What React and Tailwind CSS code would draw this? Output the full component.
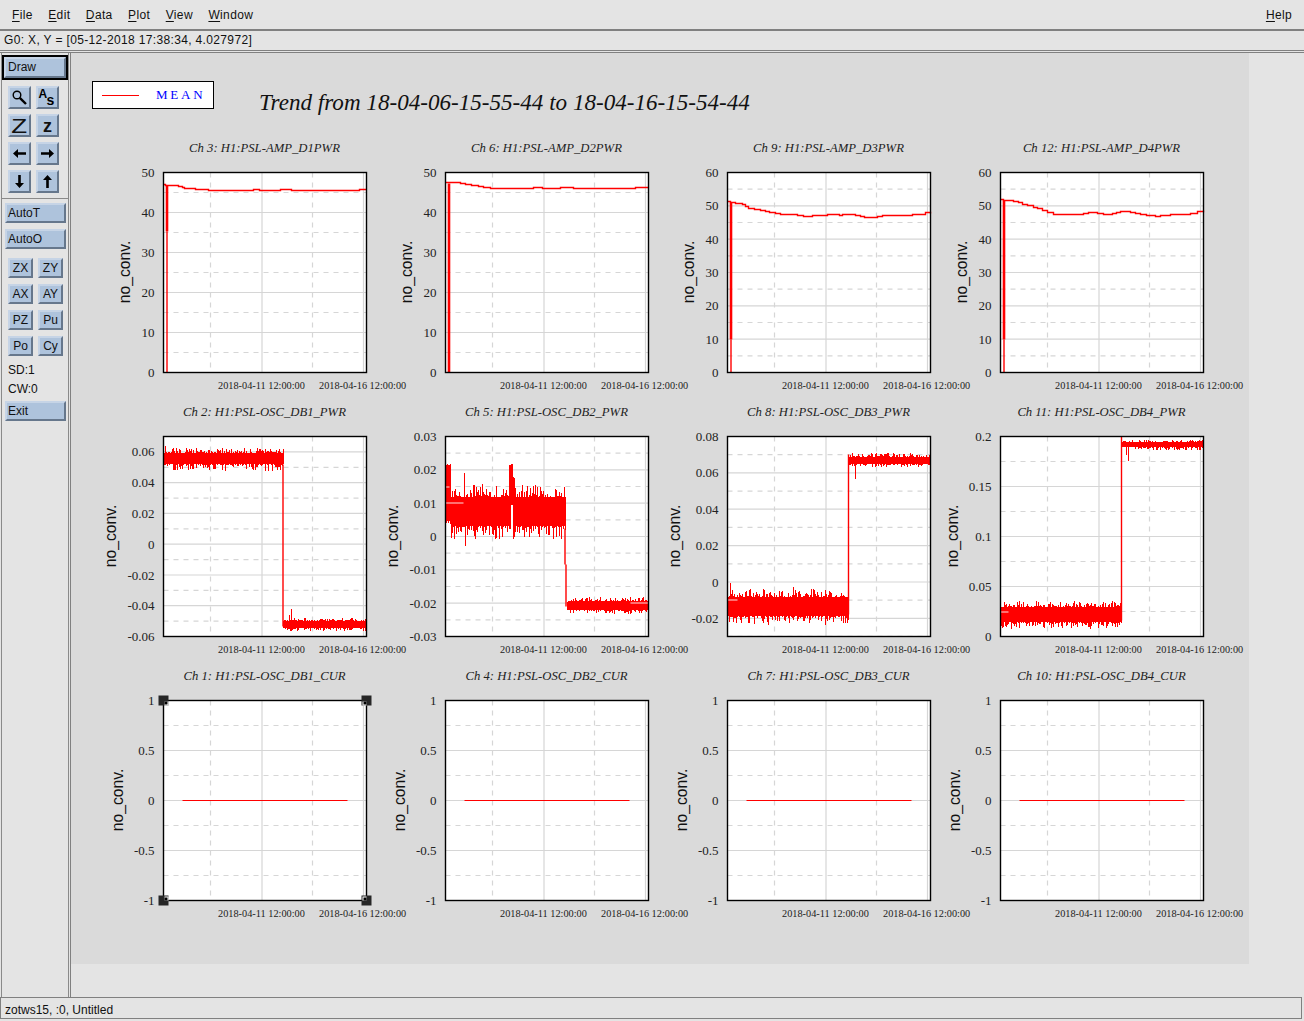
import React from "react";

const rng = (seed) => () => {
  seed = (seed * 16807) % 2147483647;
  return seed / 2147483647;
};

// one noisy block: a vertical stroke per pixel column
const band = (x0, x1, top, bot, up, down, seed) => {
  const r = rng(seed);
  let d = "";
  for (let x = x0; x < x1; x++) {
    const t = top - Math.pow(r(), 2.5) * up + r();
    const b = bot + Math.pow(r(), 2.5) * down - r();
    d += `M${x + 0.5} ${t.toFixed(1)}V${b.toFixed(1)}`;
  }
  return d;
};

const steps = (pts) => {
  let d = `M${pts[0][0]} ${pts[0][1]}`;
  for (let i = 1; i < pts.length; i++) {
    d += `H${pts[i][0]}V${pts[i][1]}`;
  }
  return d;
};

const scale50 = [[0, "50"], [40, "40"], [80, "30"], [120, "20"], [160, "10"], [200, "0"]];
const scale60 = [[0, "60"], [33.3, "50"], [66.7, "40"], [100, "30"], [133.3, "20"], [166.7, "10"], [200, "0"]];
const scaleOne = [[0, "1"], [50, "0.5"], [100, "0"], [150, "-0.5"], [200, "-1"]];

const plots = [
  {
    title: "Ch 3: H1:PSL-AMP_D1PWR", ticks: scale50, label: -34,
    line: steps([[0, 12], [2, 13], [15, 14], [19, 15], [21, 16], [32, 17], [45, 18], [90, 17], [96, 18], [117, 17], [128, 18], [196, 17], [203, 17]]),
    thick: "M3.5 13V59", spike: "M3.5 59V200",
  },
  {
    title: "Ch 6: H1:PSL-AMP_D2PWR", ticks: scale50, label: -34,
    line: steps([[0, 10], [15, 11], [20, 12], [26, 13], [33, 14], [38, 15], [45, 16], [88, 15], [97, 16], [115, 15], [128, 16], [190, 15], [203, 15]]),
    thick: "M3.5 11V200",
  },
  {
    title: "Ch 9: H1:PSL-AMP_D3PWR", ticks: scale60, label: -34,
    line: steps([[0, 29], [3, 30], [8, 31], [15, 32], [18, 34], [21, 36], [27, 37], [33, 38], [38, 39], [42, 40], [48, 41], [53, 42], [70, 43], [76, 44], [85, 43], [100, 42], [112, 43], [115, 42], [128, 43], [133, 44], [137, 45], [150, 44], [155, 43], [185, 42], [198, 40], [203, 41]]),
    thick: "M3.5 30V167", spike: "M3.5 167V200",
  },
  {
    title: "Ch 12: H1:PSL-AMP_D4PWR", ticks: scale60, label: -34,
    line: steps([[0, 27], [3, 28], [13, 29], [18, 30], [22, 32], [27, 33], [33, 35], [37, 36], [42, 38], [47, 40], [53, 42], [83, 41], [88, 40], [97, 41], [103, 42], [112, 41], [116, 40], [120, 39], [130, 40], [135, 41], [140, 42], [146, 43], [155, 44], [160, 43], [170, 42], [180, 42], [190, 41], [197, 39], [203, 38]]),
    thick: "M3.5 28V167", spike: "M3.5 167V200",
  },
  {
    title: "Ch 2: H1:PSL-OSC_DB1_PWR", label: -48,
    ticks: [[15.4, "0.06"], [46.2, "0.04"], [76.9, "0.02"], [107.7, "0"], [138.5, "-0.02"], [169.2, "-0.04"], [200, "-0.06"]],
    noise: band(0, 120, 16, 28, 5, 7, 11) + band(119, 203, 184, 192, 3, 3, 23) + "M1.5 9V17M127.5 172V184M125.5 178V184",
    spike: "M119.5 28V190",
  },
  {
    title: "Ch 5: H1:PSL-OSC_DB2_PWR", label: -48,
    ticks: [[0, "0.03"], [33.3, "0.02"], [66.7, "0.01"], [100, "0"], [133.3, "-0.01"], [166.7, "-0.02"], [200, "-0.03"]],
    noise: band(5, 63, 60, 90, 13, 14, 37) + band(67, 120, 60, 90, 13, 14, 41) + band(0, 5, 28, 85, 2, 3, 5) + band(63, 65, 28, 92, 0, 4, 6) + band(65, 67, 27, 69, 0, 0, 7) + band(67, 69, 40, 95, 0, 0, 9) + band(121, 203, 164, 174, 4, 4, 53) + "M18.5 36V70M19.5 85V109",
    spike: "M119.5 92V128M120.5 128V170",
    marks: "M0 66.5H18M0 50.5H4M185 166.5H203",
  },
  {
    title: "Ch 8: H1:PSL-OSC_DB3_PWR", label: -48,
    ticks: [[0, "0.08"], [36.4, "0.06"], [72.7, "0.04"], [109.1, "0.02"], [145.5, "0"], [181.8, "-0.02"]],
    noise: band(0, 121, 160, 180, 8, 8, 61) + band(121, 203, 20, 28, 4, 3, 71) + "M2.5 146V165M65.5 150V165M40.5 170V188M97.5 170V188M127.5 25V42",
    spike: "M121 18V178",
    marks: "M0 163.5H10",
  },
  {
    title: "Ch 11: H1:PSL-OSC_DB4_PWR", label: -43,
    ticks: [[0, "0.2"], [50, "0.15"], [100, "0.1"], [150, "0.05"], [200, "0"]],
    noise: band(0, 121, 170, 186, 6, 7, 83) + band(121, 203, 5, 11, 2, 3, 97) + "M127.5 8V24M125.5 8V18",
    spike: "M121 0V184",
    marks: "M0 175.5H8",
  },
  { title: "Ch 1: H1:PSL-OSC_DB1_CUR", ticks: scaleOne, label: -41, flat: true, handles: true },
  { title: "Ch 4: H1:PSL-OSC_DB2_CUR", ticks: scaleOne, label: -41, flat: true },
  { title: "Ch 7: H1:PSL-OSC_DB3_CUR", ticks: scaleOne, label: -41, flat: true },
  { title: "Ch 10: H1:PSL-OSC_DB4_CUR", ticks: scaleOne, label: -41, flat: true },
];

const Handle = ({ x, y, dx, dy }) => (
  <g>
    <rect x={x - 5} y={y - 5} width="10" height="10" fill="#262626" />
    <rect x={dx > 0 ? x + 1 : x - 4} y={dy > 0 ? y + 1 : y - 4} width="4" height="4" fill="#fff" />
    <rect x={dx > 0 ? x + 1 : x - 3} y={dy > 0 ? y + 1 : y - 3} width="3" height="3" fill="#000" />
  </g>
);

const Plot = ({ plot }) => {
  const dashed = plot.ticks.slice(0, -1).map(([y], i) => (y + plot.ticks[i + 1][0]) / 2);
  const last = plot.ticks[plot.ticks.length - 1][0];
  if (last < 200) dashed.push(last + (last - plot.ticks[plot.ticks.length - 2][0]) / 2);

  return (
    <div className="h-[264px]">
      <div className="mb-4 h-4 w-[266px] pl-[63px] text-center font-['Liberation_Serif',serif] text-[12.7px] leading-4 whitespace-nowrap text-[#222] italic">
        {plot.title}
      </div>
      <svg width="282" height="232" className="overflow-visible">
        <g transform="translate(63.5 0.5)">
          <rect x="0" y="0" width="203" height="200" fill="#fff" />
          {plot.ticks.map(([y]) => (
            <line key={y} x1="0" x2="203" y1={y} y2={y} stroke="#d6d6d6" strokeWidth="1.2" />
          ))}
          {dashed.map((y) => (
            <line key={y} x1="0" x2="203" y1={y} y2={y} stroke="#d6d6d6" strokeWidth="1.2" strokeDasharray="5 5" />
          ))}
          <line x1="47" x2="47" y1="0" y2="200" stroke="#d6d6d6" strokeWidth="1.2" strokeDasharray="5 5" />
          <line x1="98.5" x2="98.5" y1="0" y2="200" stroke="#d6d6d6" strokeWidth="1.2" />
          <line x1="149" x2="149" y1="0" y2="200" stroke="#d6d6d6" strokeWidth="1.2" strokeDasharray="5 5" />
          <line x1="200" x2="200" y1="0" y2="200" stroke="#d6d6d6" strokeWidth="1.2" />

          {plot.noise && <path d={plot.noise} stroke="#ff0000" strokeWidth="1" fill="none" shapeRendering="crispEdges" />}
          {plot.marks && <path d={plot.marks} stroke="#ffe0e0" strokeWidth="1" fill="none" />}
          {plot.line && <path d={plot.line} stroke="#ff0000" strokeWidth="1.4" fill="none" />}
          {plot.thick && <path d={plot.thick} stroke="#ff0000" strokeWidth="2.6" fill="none" />}
          {plot.spike && <path d={plot.spike} stroke="#ff0000" strokeWidth="1.4" fill="none" />}
          {plot.flat && <path d="M19 100H184" stroke="#ff0000" strokeWidth="1" fill="none" />}

          <rect x="0" y="0" width="203" height="200" fill="none" stroke="#000" strokeWidth="1.4" />

          {plot.handles && (
            <>
              <Handle x={0} y={0} dx={1} dy={1} />
              <Handle x={203} y={0} dx={-1} dy={1} />
              <Handle x={0} y={200} dx={1} dy={-1} />
              <Handle x={203} y={200} dx={-1} dy={-1} />
            </>
          )}

          <g fontFamily="'Liberation Serif', serif" fill="#222">
            {plot.ticks.map(([y, text]) => (
              <text key={text} x="-9" y={y + 4.5} textAnchor="end" fontSize="13">
                {text}
              </text>
            ))}
            <text x="54.5" y="216" fontSize="10.3">2018-04-11 12:00:00</text>
            <text x="155.5" y="216" fontSize="10.3">2018-04-16 12:00:00</text>
          </g>
          <text
            transform={`translate(${plot.label} 99.5) rotate(-90)`}
            textAnchor="middle"
            fontFamily="'Liberation Sans', sans-serif"
            fontSize="15.7"
            fill="#111"
          >
            no_conv.
          </text>
        </g>
      </svg>
    </div>
  );
};

const bevel =
  "flex items-center border-2 border-t-[#c6d4e6] border-l-[#c6d4e6] border-r-[#66778c] border-b-[#66778c] bg-[#aec3dc] text-[#111]";

const ToolIcon = ({ children }) => (
  <button className={`${bevel} h-[23px] w-[23px] justify-center`}>{children}</button>
);

const Arrow = ({ rotate }) => (
  <svg width="15" height="15" viewBox="0 0 15 15">
    <path d="M1 7.5 6 3V6.2H14V8.8H6V12Z" fill="#000" transform={`rotate(${rotate} 7.5 7.5)`} />
  </svg>
);

const TextButton = ({ label }) => (
  <button className={`${bevel} h-5 w-[25px] justify-center`}>{label}</button>
);

const WideButton = ({ label, className }) => (
  <button className={`${bevel} ml-[3px] h-5 w-[61px] pl-[1px] ${className}`}>{label}</button>
);

const Sidebar = () => (
  <div className="ml-px w-[68px] shrink-0 border-r border-l border-[#8a8a8a] pt-0.5">
    <div className="h-[25px] w-[66px] border-2 border-black">
      <button className={`${bevel} h-full w-full pb-0.5 pl-0.5`}>Draw</button>
    </div>
    <div className="mt-1.5 ml-1.5 grid w-[51px] grid-cols-2 gap-[5px]">
      <ToolIcon>
        <svg width="17" height="17" viewBox="0 0 17 17">
          <circle cx="6" cy="6" r="3.8" fill="none" stroke="#000" strokeWidth="1.4" />
          <path d="M8.8 8.8 15 15" stroke="#000" strokeWidth="2.4" />
        </svg>
      </ToolIcon>
      <ToolIcon>
        <svg width="19" height="19" viewBox="0 0 19 19">
          <text x="0.5" y="10" fontFamily="'Liberation Sans', sans-serif" fontSize="12" fontWeight="700">A</text>
          <text x="8.5" y="17" fontFamily="'Liberation Sans', sans-serif" fontSize="14" fontWeight="700">s</text>
        </svg>
      </ToolIcon>
      <ToolIcon>
        <span className="scale-x-[1.3] font-['Liberation_Sans',sans-serif] text-[20px] leading-none">Z</span>
      </ToolIcon>
      <ToolIcon>
        <span className="font-['Liberation_Sans',sans-serif] text-[18px] leading-none font-bold">z</span>
      </ToolIcon>
      <ToolIcon><Arrow rotate={0} /></ToolIcon>
      <ToolIcon><Arrow rotate={180} /></ToolIcon>
      <ToolIcon><Arrow rotate={270} /></ToolIcon>
      <ToolIcon><Arrow rotate={90} /></ToolIcon>
    </div>
    <div className="mt-[5px] border-t border-[#8a8a8a]" />
    <WideButton label="AutoT" className="mt-1" />
    <WideButton label="AutoO" className="mt-1.5" />
    <div className="mt-[9px] ml-1.5 grid w-[55px] grid-cols-2 gap-x-[5px] gap-y-1.5">
      {["ZX", "ZY", "AX", "AY", "PZ", "Pu", "Po", "Cy"].map((b) => (
        <TextButton key={b} label={b} />
      ))}
    </div>
    <div className="mt-[5px] ml-1.5 h-[19px] leading-[19px]">SD:1</div>
    <div className="ml-1.5 h-[19px] leading-[19px]">CW:0</div>
    <WideButton label="Exit" className="mt-0.5" />
  </div>
);

const Menu = ({ label }) => (
  <span className="tracking-[0.35px]">
    <span className="underline underline-offset-2">{label[0]}</span>
    {label.slice(1)}
  </span>
);

export default function App() {
  return (
    <div className="flex h-[1021px] w-[1304px] flex-col overflow-hidden bg-[#e4e4e4] font-['Liberation_Sans',sans-serif] text-[12px] text-[#111]">
      {/* Menu bar */}
      <div className="flex h-[31px] shrink-0 items-center justify-between border-b-2 border-[#808080] pr-[12px] pl-3">
        <div className="flex gap-[15.5px]">
          {["File", "Edit", "Data", "Plot", "View", "Window"].map((m) => (
            <Menu key={m} label={m} />
          ))}
        </div>
        <Menu label="Help" />
      </div>

      {/* Readout line */}
      <div className="flex h-[20px] shrink-0 items-center border-b border-[#808080] pb-0.5 pl-1 tracking-[0.35px]">
        G0: X, Y = [05-12-2018 17:38:34, 4.027972]
      </div>
      <div className="mt-px h-px shrink-0 bg-[#808080]" />

      <div className="flex h-[944px] shrink-0">
        <Sidebar />
        <div className="ml-px flex-1 border-l border-[#808080]">
          <div className="h-[911px] w-[1178px] bg-[#dadada] pt-7 pl-[21px]">
            <div className="flex h-[28px] items-center">
              <div className="flex h-[28px] w-[122px] shrink-0 items-center border border-black bg-white pl-[9px]">
                <div className="h-px w-[37px] bg-[#ff0000]" />
                <span className="ml-[17px] font-['Liberation_Serif',serif] text-[13px] tracking-[2.8px] text-[#0000ff]">MEAN</span>
              </div>
              <div className="mt-[14px] ml-[45px] font-['Liberation_Serif',serif] text-[23.1px] whitespace-nowrap text-[#111] italic">
                Trend from 18-04-06-15-55-44 to 18-04-16-15-54-44
              </div>
            </div>
            <div className="mt-[31px] ml-2 grid grid-cols-[282px_282px_273px_282px]">
              {plots.map((p) => (
                <Plot key={p.title} plot={p} />
              ))}
            </div>
          </div>
        </div>
      </div>

      {/* Status bar */}
      <div className="flex h-[22px] w-[1302px] shrink-0 items-center border border-[#808080] pt-[3px] pl-1">
        zotws15, :0, Untitled
      </div>
    </div>
  );
}
